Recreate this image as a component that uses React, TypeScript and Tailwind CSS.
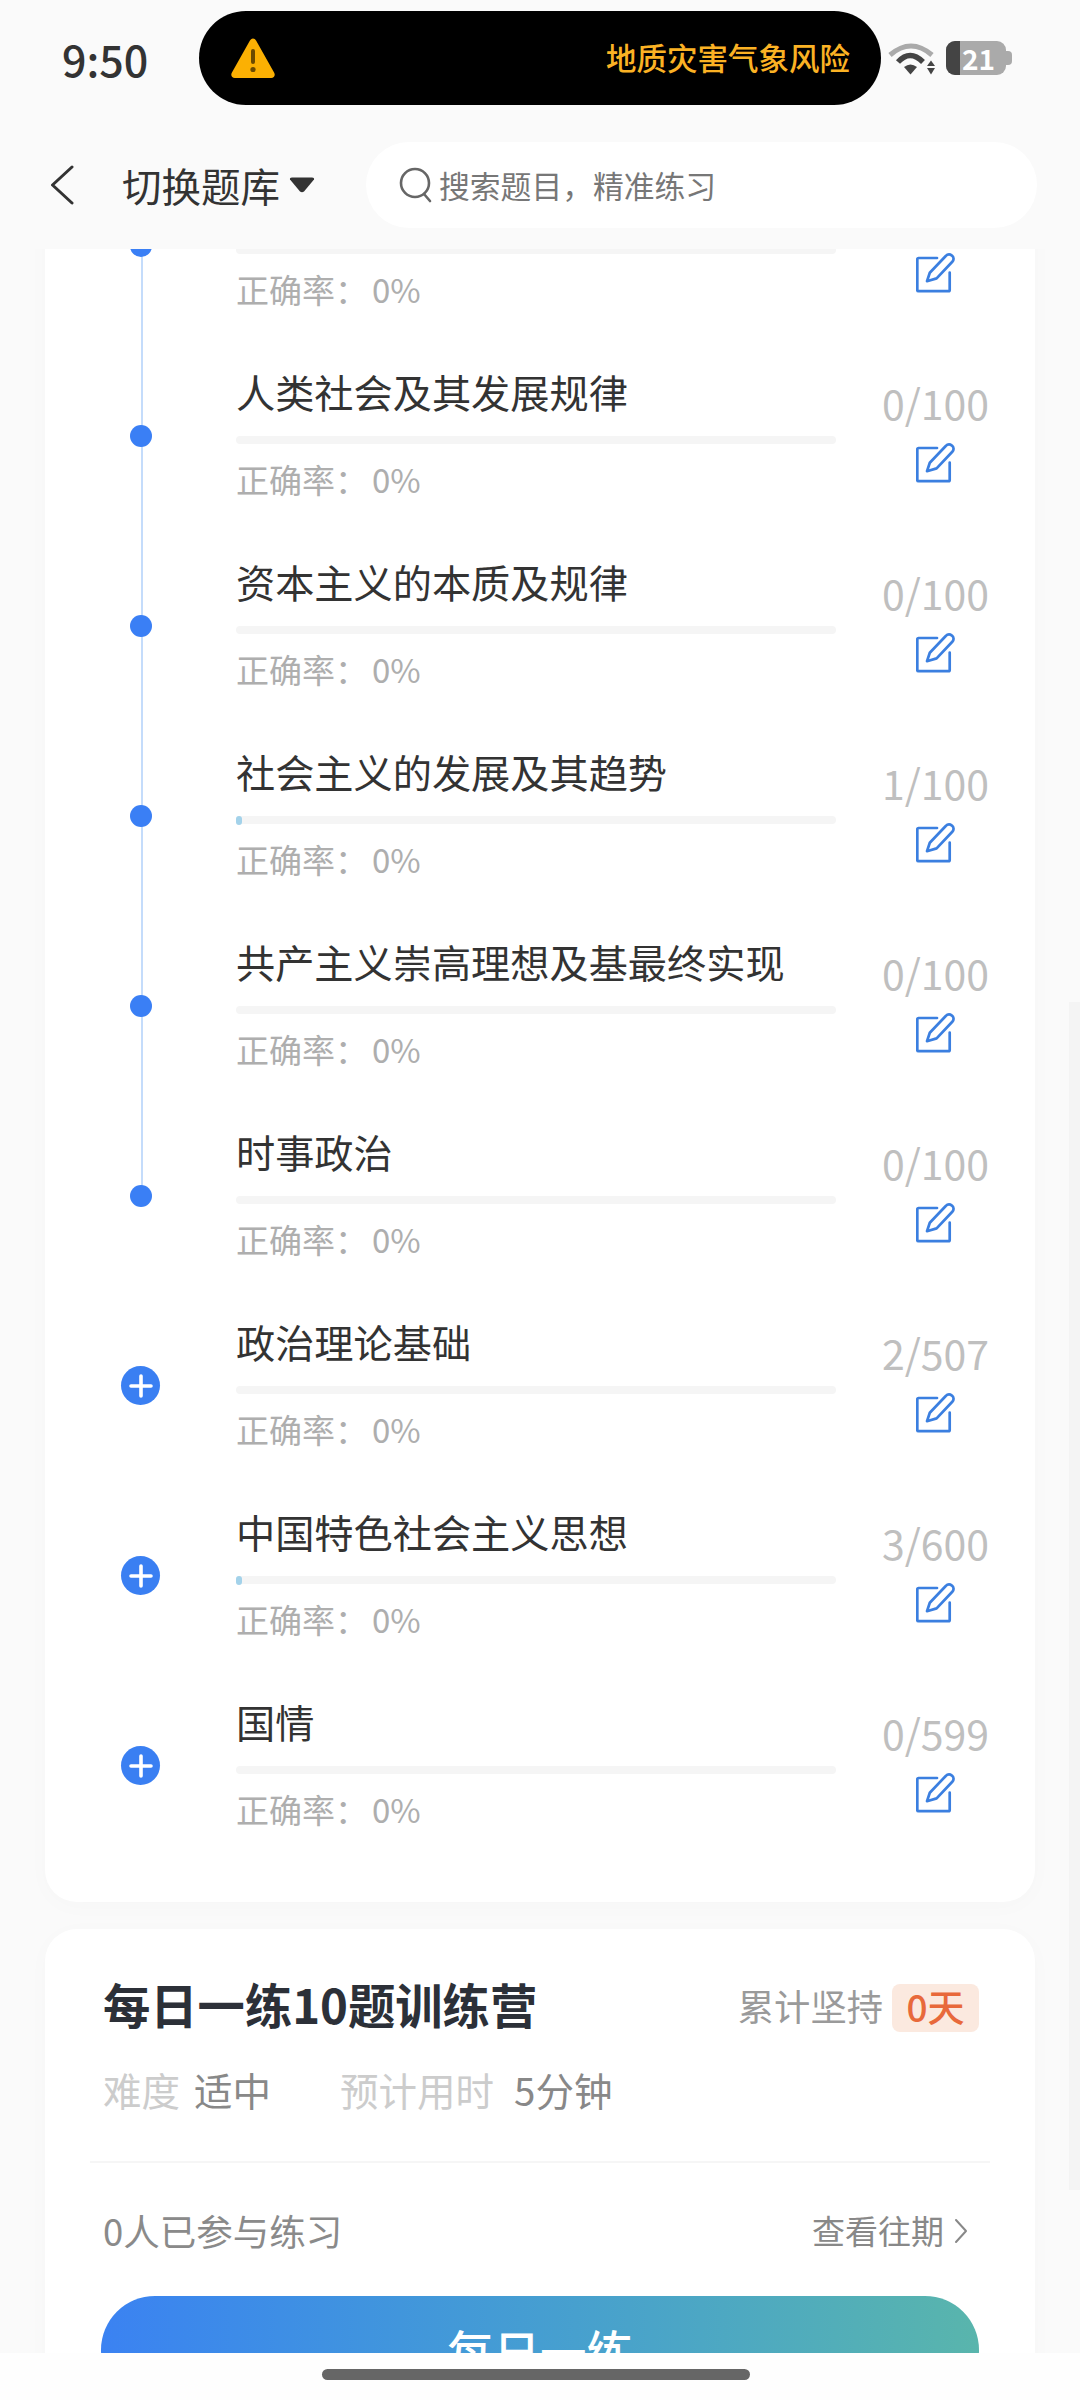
const cjk = '"Noto Sans CJK SC", "Noto Sans", sans-serif';

type Row = { title: string; count: string; fill?: boolean; plus?: boolean; line?: boolean };

const rows: Row[] = [
  { title: '', count: '', line: true },
  { title: '人类社会及其发展规律', count: '0/100', line: true },
  { title: '资本主义的本质及规律', count: '0/100', line: true },
  { title: '社会主义的发展及其趋势', count: '1/100', fill: true, line: true },
  { title: '共产主义崇高理想及基最终实现', count: '0/100', line: true },
  { title: '时事政治', count: '0/100' },
  { title: '政治理论基础', count: '2/507', plus: true },
  { title: '中国特色社会主义思想', count: '3/600', fill: true, plus: true },
  { title: '国情', count: '0/599', plus: true },
];

function EditIcon() {
  return (
    <svg width="40" height="40" viewBox="0 0 40 40" fill="none" stroke="#3b7fe0" strokeWidth="2.7" strokeLinejoin="round" strokeLinecap="round">
      <path d="M21 5H2.5a1.2 1.2 0 0 0-1.2 1.2V37a1.2 1.2 0 0 0 1.2 1.2h30a1.2 1.2 0 0 0 1.2-1.2V19.5" />
      <path d="M11 28.2l2.8-8.4L29.5 3.2c2-2 4.6-2 6.4-.6 2 1.8 2.2 4.2.4 6.2L20.6 25.4z" />
    </svg>
  );
}

function WarningIcon() {
  return (
    <svg width="46" height="42" viewBox="0 0 46 42">
      <path d="M23 1.5c1.4 0 2.5 1 3.2 2.3l18 32c1.4 2.6-.2 5.2-3 5.2H4.800c-2.800 0-4.400-2.600-3-5.200l18-32C20.500 2.500 21.600 1.500 23 1.500z" fill="#fbb003" />
      <rect x="21" y="12" width="4" height="15" rx="2" fill="#6b4a00" />
      <circle cx="23" cy="32.500" r="2.600" fill="#6b4a00" />
    </svg>
  );
}

function WifiIcon() {
  return (
    <svg width="48" height="34" viewBox="0 0 48 34" fill="none">
      <path d="M2 14Q23-4 44 14" stroke="#aaaaaa" strokeWidth="5" />
      <path d="M10 21Q22 8 35 21" stroke="#444444" strokeWidth="5.500" />
      <path d="M16 26Q22.500 21 29 26L22.500 33.500Z" fill="#444444" />
      <path d="M43 19.500L47 25H39Z" fill="#444444" />
      <path d="M39 27H47L43 33.500Z" fill="#444444" />
    </svg>
  );
}

function RowItem({ row }: { row: Row }) {
  return (
    <div className="flex h-[190px]">
      <div className="relative flex w-[191px] shrink-0 justify-center">
        {row.line && <div className="absolute left-[96px] top-[90px] h-[190px] w-[2px] bg-[#c4dcfb]" />}
        {row.plus ? (
          <div className="relative mt-[70px] flex h-[39px] w-[39px] items-center justify-center rounded-full bg-[#3a7ff2]">
            <svg width="24" height="24" viewBox="0 0 24 24" fill="none" stroke="#ffffff" strokeWidth="3.600" strokeLinecap="round">
              <path d="M12 2V22M2 12H22" />
            </svg>
          </div>
        ) : (
          <div className="relative mt-[79px] h-[22px] w-[22px] rounded-full bg-[#3a7ff5]" />
        )}
      </div>
      <div className="flex w-[600px] shrink-0 flex-col pt-[19px]">
        <div className="h-[52px] whitespace-nowrap text-[39.200px] leading-[52px] text-[#333333]">{row.title}</div>
        <div className="mt-[19px] h-[8px] overflow-visible rounded-full bg-[#f5f5f5]">
          {row.fill && <div className="h-[9px] w-[6px] rounded-full bg-[#a3d2ea]" />}
        </div>
        <div className="mt-[13px] whitespace-nowrap text-[33px] leading-[44px] text-[#aeaeae]">
          {'正确率\uFF1A'}
          <span className="ml-[4px]">0%</span>
        </div>
      </div>
      <div className="flex w-[199px] shrink-0 flex-col items-center pt-[32px]">
        <div className="h-[48px] text-[41px] leading-[48px] text-[#bfbfbf]">{row.count}</div>
        <div className="mt-[17px]">
          <EditIcon />
        </div>
      </div>
    </div>
  );
}

export default function App() {
  return (
    <div className="flex h-[2400px] w-[1080px] flex-col overflow-hidden bg-[#fafafa]" style={{ fontFamily: cjk }}>
      <header className="h-[249px] shrink-0 pt-[11px]">
        <div className="flex h-[94px] items-center pl-[62px]">
          <div className="w-[137px] text-[43px] font-medium leading-none text-[#333333]">9:50</div>
          <div className="flex h-[94px] w-[682px] items-center justify-between rounded-full bg-black pl-[31px] pr-[31px]">
            <WarningIcon />
            <span className="text-[30.500px] font-medium text-[#fbb224]">地质灾害气象风险</span>
          </div>
          <div className="ml-[7px]">
            <WifiIcon />
          </div>
          <div className="ml-[10px] flex items-center">
            <div className="flex h-[34px] w-[60px] items-center rounded-[9px] bg-[#aaaaaa]">
              <div className="h-full w-[14px] rounded-l-[9px] bg-[#444444]" />
              <div className="whitespace-nowrap pl-[2px] text-[28px] font-bold leading-none text-white">21</div>
            </div>
            <div className="h-[14px] w-[6px] rounded-r-[4px] bg-[#aaaaaa]" />
          </div>
        </div>
        <div className="mt-[37px] flex h-[86px] items-center pl-[50px]">
          <svg width="24" height="40" viewBox="0 0 24 40" fill="none" stroke="#333333" strokeWidth="3" strokeLinecap="round" strokeLinejoin="round">
            <path d="M22 2L2.500 20L22 38" />
          </svg>
          <span className="ml-[48px] text-[39.500px] text-[#333333]">切换题库</span>
          <svg className="ml-[9px]" width="26" height="16" viewBox="0 0 26 16">
            <path d="M1 2.500Q0.500 0.500 3 0.500H23Q25.500 0.500 25 2.500L15 14.500Q13 16 11 14.500Z" fill="#333333" />
          </svg>
          <div className="ml-[51px] flex h-[86px] w-[671px] items-center rounded-full bg-white pl-[33px]">
            <svg width="34" height="36" viewBox="0 0 34 36" fill="none" stroke="#666666" strokeWidth="2.600" strokeLinecap="round">
              <circle cx="16" cy="16" r="14" />
              <path d="M25 27L31 34" />
            </svg>
            <span className="ml-[6px] text-[30.800px] text-[#777777]">{'搜索题目\uFF0C精准练习'}</span>
          </div>
        </div>
      </header>

      <main className="relative min-h-0 flex-1 overflow-hidden">
        <div className="absolute right-0 top-[753px] h-[1188px] w-[11px] bg-[#f4f4f4]" />
        <div className="mx-[45px] -mt-[93px]">
          <section className="rounded-[32px] bg-white pb-[36px] shadow-[0_4px_24px_rgba(0,0,0,0.02)]">
            {rows.map((row, i) => (
              <RowItem key={i} row={row} />
            ))}
          </section>

          <section className="mt-[27px] rounded-[32px] bg-white px-[58px] pt-[47px] shadow-[0_4px_24px_rgba(0,0,0,0.02)]">
            <div className="flex h-[64px] items-center justify-between">
              <span className="pb-[8px] text-[47.300px] font-semibold leading-[64px] text-[#2c3038]">每日一练10题训练营</span>
              <div className="flex items-center">
                <span className="pb-[6px] text-[36.300px] text-[#9a9a9a]">累计坚持</span>
                <span className="ml-[9px] mr-[-2px] flex h-[48px] w-[87px] items-center justify-center rounded-[8px] bg-[#fbe9df] pb-[3px] text-[37px] font-medium text-[#e8693b]">0天</span>
              </div>
            </div>
            <div className="mt-[26px] flex h-[48px] items-center text-[38.500px]">
              <span className="text-[#cccccc]">难度</span>
              <span className="ml-[14px] text-[#888888]">适中</span>
              <span className="ml-[69px] text-[#cccccc]">预计用时</span>
              <span className="ml-[20px] text-[#888888]">5分钟</span>
            </div>
            <div className="-mx-[13px] mt-[47px] h-[2px] bg-[#f6f6f6]" />
            <div className="mt-[46px] flex h-[44px] items-center justify-between">
              <span className="text-[36.500px] text-[#8a8a8a]">0人已参与练习</span>
              <div className="flex items-center">
                <span className="text-[33px] text-[#888888]">查看往期</span>
                <svg className="ml-[9px] mr-[8px]" width="16" height="26" viewBox="0 0 16 26" fill="none" stroke="#888888" strokeWidth="2" strokeLinecap="round" strokeLinejoin="round">
                  <path d="M3 2L13 13L3 24" />
                </svg>
              </div>
            </div>
            <div className="-mx-[2px] mt-[43px] flex h-[108px] items-center justify-center rounded-[54px] bg-gradient-to-r from-[#3b82f2] to-[#59b5ac] text-[46.500px] font-medium text-white">
              每日一练
            </div>
          </section>
        </div>
      </main>

      <footer className="flex h-[47px] shrink-0 justify-center bg-[#fefefe] pr-[8px] pt-[16px]">
        <div className="h-[11px] w-[428px] rounded-full bg-[#666666]" />
      </footer>
    </div>
  );
}
